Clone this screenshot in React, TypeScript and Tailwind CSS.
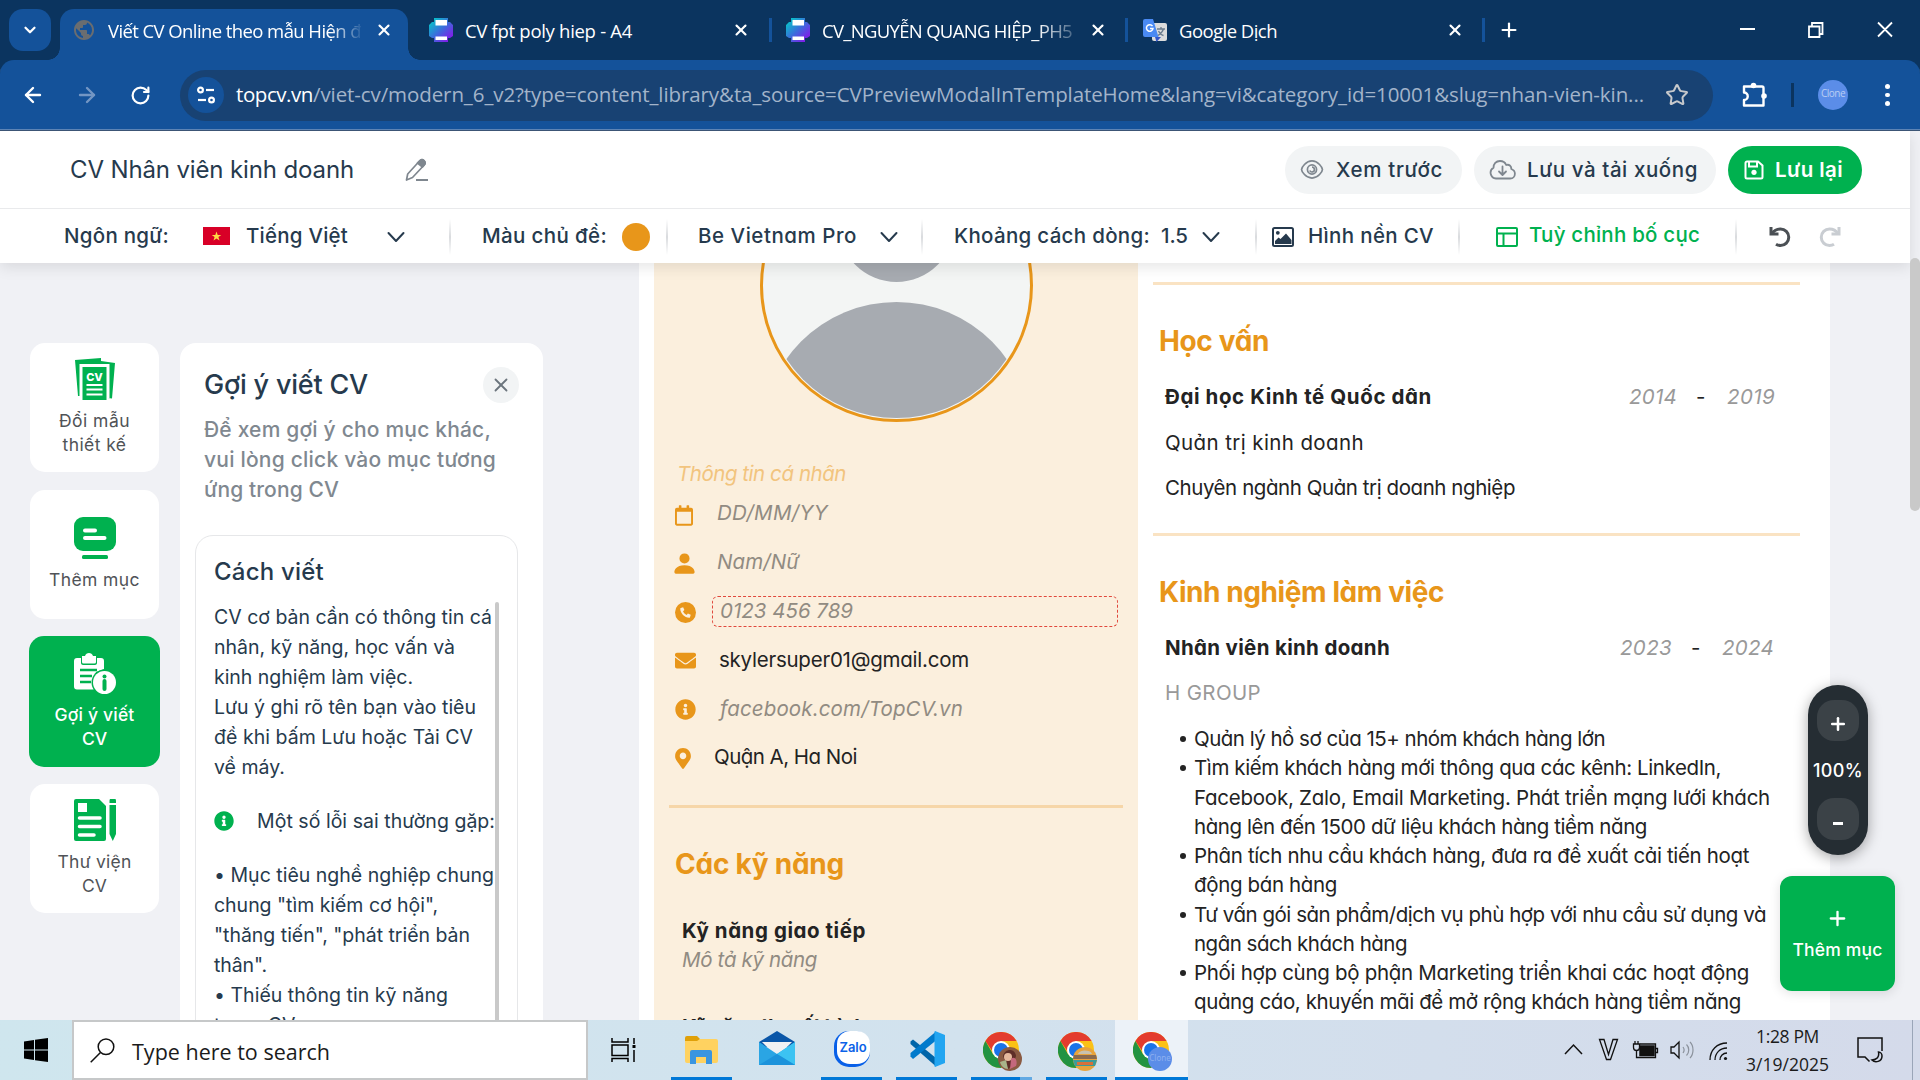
import { useLayoutEffect, useRef, useState, type ReactNode } from "react";
import { ChevronDown, X, Plus, ArrowLeft, ArrowRight, RotateCw, Star } from "lucide-react";
import { BsPersonFill } from "react-icons/bs";
import { FaEnvelope, FaInfoCircle, FaMapMarkerAlt, FaRegCalendar } from "react-icons/fa";
import { MdPublic } from "react-icons/md";

/* One line of text that is spaced to fill the width of its box. */
function T({ c, children }: { c: string; children: string }) {
  const box = useRef<HTMLSpanElement>(null);
  const inner = useRef<HTMLSpanElement>(null);
  const [gap, setGap] = useState(0);
  useLayoutEffect(() => {
    if (!box.current || !inner.current) return;
    inner.current.style.letterSpacing = "0px";
    const natural = inner.current.getBoundingClientRect().width;
    const value = (box.current.clientWidth - natural) / children.length;
    inner.current.style.letterSpacing = `${value}px`;
    setGap(value);
  }, [children]);
  return (
    <span ref={box} className={`block shrink-0 whitespace-pre ${c}`}>
      <span ref={inner} style={{ letterSpacing: `${gap}px` }}>{children}</span>
    </span>
  );
}

const PrinterIcon = () => (
  <svg viewBox="0 0 24 24" className="size-6 shrink-0">
    <defs>
      <linearGradient id="pg" x1="0" y1="0" x2="1" y2="1">
        <stop offset="0.1" stopColor="#06c3c9" />
        <stop offset="0.5" stopColor="#3c6bdc" />
        <stop offset="0.85" stopColor="#7d22e8" />
      </linearGradient>
    </defs>
    <path d="M5 0h14v4h2l3 3v11l-3 2h-2v4H5v-4H3l-3-2V7l3-3h2z" fill="url(#pg)" />
    <path d="M6.500 2h11.500v5.500H6.500zM6.500 18.500h11.500v3.500H6.500z" fill="#fff" />
  </svg>
);

const TranslateIcon = () => (
  <svg viewBox="0 0 24 24" className="size-6 shrink-0">
    <rect x="9" y="5" width="15" height="18" rx="2" fill="#dcdcdc" />
    <path d="M14 11h8M18 9v2M20.500 11c-1 3-3 5-5.500 6.500M15.500 13c1 2 3 4 5 4.500" stroke="#6b7b8c" strokeWidth="1.300" fill="none" />
    <path d="M12 19h6l-4.500 5z" fill="#3456c8" />
    <path d="M2 1h8l5.500 18H2a2 2 0 0 1-2-2V3a2 2 0 0 1 2-2z" fill="#4a8af4" />
    <path d="M9.500 8.200A3.300 3.300 0 1 0 10 10.500H7" stroke="#fff" strokeWidth="1.500" fill="none" />
  </svg>
);

const TabX = ({ c }: { c: string }) => <X className={`size-[18px] shrink-0 text-white ${c}`} strokeWidth={2.8} />;
const TabSep = ({ c }: { c: string }) => <div className={`h-6 w-[3px] shrink-0 bg-[#14529a] ${c}`} />;

function TabStrip() {
  return (
    <div className="flex h-[60px] items-start bg-[#0b345f] font-['Open_Sans','Noto_Sans',sans-serif] text-[18.500px] text-white">
      <div className="mt-[9px] ml-[9px] flex h-[42px] w-[42px] shrink-0 items-center justify-center rounded-[14px] bg-[#14529a]">
        <ChevronDown className="size-[18px]" strokeWidth={3} />
      </div>
      <div className="relative mt-[9px] ml-[9px] flex h-[51px] w-[348px] shrink-0 items-center rounded-t-[14px] bg-[#14529a] pb-[9px] pl-[12px]">
        <div className="absolute bottom-0 -left-3 size-3 bg-[radial-gradient(circle_at_0_0,transparent_11.5px,#14529a_12px)]" />
        <div className="absolute -right-3 bottom-0 size-3 bg-[radial-gradient(circle_at_100%_0,transparent_11.5px,#14529a_12px)]" />
        <MdPublic className="size-6 shrink-0 text-[#6a6d70]" />
        <div className="ml-[12px] pt-px [mask-image:linear-gradient(to_right,black_88%,transparent_101%)]">
          <T c="w-[253px]">Viết CV Online theo mẫu Hiện đ</T>
        </div>
        <TabX c="ml-[14px]" />
      </div>
      <div className="flex h-[60px] items-center">
        <div className="ml-[21px]"><PrinterIcon /></div>
        <T c="ml-[12px] w-[167px] pt-px">CV fpt poly hiep - A4</T>
        <TabX c="ml-[100px]" />
        <TabSep c="ml-[19px]" />
        <div className="ml-[14px]"><PrinterIcon /></div>
        <div className="ml-[12px] pt-px [mask-image:linear-gradient(to_right,black_86%,transparent_105%)]">
          <T c="w-[250px]">CV_NGUYỄN QUANG HIỆP_PH5</T>
        </div>
        <TabX c="ml-[17px]" />
        <TabSep c="ml-[18px]" />
        <div className="ml-[15px]"><TranslateIcon /></div>
        <T c="ml-[12px] w-[98px] pt-px">Google Dịch</T>
        <TabX c="ml-[169px]" />
        <TabSep c="ml-[18px]" />
        <Plus className="ml-[13px] size-[22px]" strokeWidth={2.4} />
        <svg viewBox="0 0 160 20" className="ml-[218px] h-5 w-[160px]" fill="none" stroke="#fff" strokeWidth="1.800">
          <path d="M2 9h15M71 6.500h10.500V17H71zM74 6V3h10.500v11H82M140 2.500l14 14M154 2.500l-14 14" />
        </svg>
      </div>
    </div>
  );
}

function Toolbar() {
  return (
    <div className="bg-[#0b345f]">
      <div className="flex h-[71px] items-center rounded-t-[14px] border-b border-[#3c5575] bg-[#14529a] font-['Open_Sans','Noto_Sans',sans-serif] text-[20.500px] shadow-[inset_0_-1px_0_#5d84b5]">
        <ArrowLeft className="ml-[21px] size-6 text-white" strokeWidth={2.4} />
        <ArrowRight className="ml-[30px] size-6 text-[#7396c4]" strokeWidth={2.4} />
        <RotateCw className="ml-[31px] size-[21px] text-white" strokeWidth={2.5} />
        <div className="ml-[29px] flex h-[51px] w-[1533px] shrink-0 items-center rounded-full bg-[#184273]">
          <div className="ml-[8px] flex size-9 items-center justify-center rounded-full bg-[#14529a]">
            <svg viewBox="0 0 20 20" className="size-5" fill="none" stroke="#fff" strokeWidth="2.200">
              <circle cx="4.500" cy="5" r="2.400" /><path d="M10 5h8" />
              <circle cx="15.500" cy="15" r="2.400" /><path d="M2 15h8" />
            </svg>
          </div>
          <T c="-mt-[2px] ml-[12px] w-[77px] text-white">topcv.vn</T>
          <T c="-mt-[2px] w-[1331px] text-[#a3b4ca]">/viet-cv/modern_6_v2?type=content_library&ta_source=CVPreviewModalInTemplateHome&lang=vi&category_id=10001&slug=nhan-vien-kin...</T>
          <Star className="ml-[21px] size-6 text-[#c7c9cc]" strokeWidth={2} />
        </div>
        <svg viewBox="0 0 26 26" className="ml-[28px] size-[26px] shrink-0" fill="none">
          <path d="M3 4.500h18a1.500 1.500 0 0 1 1.500 1.500v17.500H3v-5.500a3.500 3.500 0 0 0 0-7.500z" stroke="#fff" strokeWidth="2.400" strokeLinejoin="round" />
          <circle cx="12.500" cy="3.500" r="2.800" fill="#fff" /><circle cx="23" cy="14" r="2.800" fill="#fff" />
        </svg>
        <div className="ml-[24px] h-6 w-[3px] bg-[#0b345f]" />
        <div className="ml-[24px] flex size-[30px] shrink-0 items-center justify-center rounded-full bg-[#5b8de8] text-[#b9cdf3]">
          <T c="-mt-[4px] w-[24px] text-[10px] leading-[16px]">Clone</T>
        </div>
        <div className="ml-[37px] flex flex-col gap-1">
          <div className="size-[4.500px] rounded-full bg-white" />
          <div className="size-[4.500px] rounded-full bg-white" />
          <div className="size-[4.500px] rounded-full bg-white" />
        </div>
      </div>
    </div>
  );
}

const Sep = ({ c }: { c: string }) => (
  <div className={`h-9 w-[2px] shrink-0 bg-gradient-to-b from-transparent via-[#d9dbde] to-transparent ${c}`} />
);
const Chev = ({ c }: { c: string }) => (
  <svg viewBox="0 0 18 12" className={`h-3 w-[18px] shrink-0 ${c}`} fill="none" stroke="#263a4d" strokeWidth="2">
    <path d="M1.500 2 9 10l7.500-8" strokeLinecap="round" strokeLinejoin="round" />
  </svg>
);

function Header() {
  return (
    <div className="relative z-10 w-[1910px] bg-white font-['Inter',sans-serif] text-[20.500px] text-[#263a4d] shadow-[0_4px_14px_rgba(0,0,0,0.1)] [font-variation-settings:'opsz'_14]">
      <div className="flex h-[78px] items-center border-b border-[#e9eaec]">
        <T c="ml-[70px] w-[284px] text-[24px]">CV Nhân viên kinh doanh</T>
        <svg viewBox="0 0 24 24" className="ml-[51px] size-6 shrink-0" fill="none" stroke="#7f878f" strokeWidth="1.700" strokeLinejoin="round">
          <path d="M1.500 22l1.200-6L14.500 3c1.500-1.600 3-1.600 4.500-.3 1.500 1.400 1.500 2.800.2 4.300L7.500 19.500z" />
          <path d="M14.500 3c1.500-1.600 3-1.600 4.500-.3 1.500 1.400 1.500 2.800.2 4.300l-1.700 2-5-4z" fill="#7f878f" />
          <path d="M11 22h12" strokeWidth="2" />
        </svg>
        <div className="ml-[856px] flex h-12 w-[177px] shrink-0 items-center rounded-full bg-[#f2f4f5] font-medium">
          <svg viewBox="0 0 24 20" className="ml-[15px] h-[19px] w-6 shrink-0" fill="none" stroke="#7f878f" strokeWidth="1.800">
            <path d="M1 10c0-2 4.500-9 11-9s11 7 11 9-4.500 9-11 9S1 12 1 10z" />
            <circle cx="12" cy="10" r="4.800" /><path d="M12 7.600A2.500 2.500 0 1 1 9.700 11" />
          </svg>
          <T c="ml-[12px] w-[107px] pt-[2px]">Xem trước</T>
        </div>
        <div className="ml-[12px] flex h-12 w-[242px] shrink-0 items-center rounded-full bg-[#f2f4f5] font-medium">
          <svg viewBox="0 0 27 20" className="ml-[15px] h-5 w-[27px] shrink-0" fill="none" stroke="#7f878f" strokeWidth="1.800" strokeLinecap="round" strokeLinejoin="round">
            <path d="M7 18.500a5.800 5.800 0 0 1-2.500-10.800C4.500 4 7 1 11 1c3 0 5.200 1.500 6.200 4C20 4 22.500 6 22.300 9c2 .7 3.600 2.300 3.600 4.700 0 2.800-2 4.800-4.600 4.800z" />
            <path d="M13.500 6.500v8M10 11.500l3.500 3.500 3.500-3.500" />
          </svg>
          <T c="ml-[11px] w-[171px] pt-[2px]">Lưu và tải xuống</T>
        </div>
        <div className="ml-[12px] flex h-12 w-[134px] shrink-0 items-center rounded-full bg-[#00b14f] font-semibold text-white">
          <svg viewBox="0 0 20 20" className="ml-[16px] size-5" fill="none" stroke="#fff" strokeWidth="2">
            <path d="M3 1.500h11l4.500 4V17a1.500 1.500 0 0 1-1.500 1.500H3A1.500 1.500 0 0 1 1.500 17V3A1.500 1.500 0 0 1 3 1.500zM5 2v4.500h8V2" />
            <circle cx="10" cy="12.300" r="2.600" fill="#fff" stroke="none" />
          </svg>
          <T c="ml-[11px] w-[68px] pt-[2px]">Lưu lại</T>
        </div>
      </div>
      <div className="flex h-[54px] items-center pt-px font-[450]">
        <T c="ml-[64px] w-[105px]">Ngôn ngữ:</T>
        <svg viewBox="0 0 27 18" className="-mt-[2px] ml-[34px] h-[18px] w-[27px] shrink-0">
          <rect width="27" height="18" fill="#d80027" />
          <path d="M13.500 4.500l1.200 3.400h3.600l-2.900 2.200 1.100 3.400-3-2.100-3 2.100 1.100-3.400-2.900-2.200h3.600z" fill="#ffda44" />
        </svg>
        <T c="ml-[16px] w-[102px]">Tiếng Việt</T>
        <Chev c="ml-[39px]" />
        <Sep c="ml-[44px]" />
        <T c="ml-[31px] w-[125px]">Màu chủ đề:</T>
        <div className="ml-[15px] size-7 shrink-0 rounded-full bg-[#e8961a]" />
        <Sep c="ml-[16px]" />
        <T c="ml-[30px] w-[159px] [font-feature-settings:'cv11']">Be Vietnam Pro</T>
        <Chev c="ml-[23px]" />
        <Sep c="ml-[23px]" />
        <T c="ml-[31px] w-[196px]">Khoảng cách dòng:</T>
        <T c="ml-[11px] w-[27px]">1.5</T>
        <Chev c="ml-[14px]" />
        <Sep c="ml-[35px]" />
        <svg viewBox="0 0 22 20" className="ml-[15px] h-5 w-[22px] shrink-0">
          <rect x="1" y="1" width="20" height="18" rx="1.500" fill="none" stroke="#263a4d" strokeWidth="2" />
          <circle cx="5.800" cy="5.800" r="1.900" fill="#263a4d" />
          <path d="M3 17v-3l3.500-3.500 2 1.500L14 6.500l5.500 6.500v4z" fill="#263a4d" />
        </svg>
        <T c="ml-[14px] w-[126px]">Hình nền CV</T>
        <Sep c="ml-[24px]" />
        <svg viewBox="0 0 22 20" className="ml-[36px] h-5 w-[22px] shrink-0" fill="none" stroke="#00b14f" strokeWidth="2">
          <rect x="1" y="1" width="20" height="18" rx="1" /><path d="M1 6.500h20M7.500 6.500V19" />
        </svg>
        <T c="-mt-[2px] ml-[11px] w-[171px] font-medium text-[#00b14f]">Tuỳ chỉnh bố cục</T>
        <Sep c="ml-[35px]" />
        <svg viewBox="0 0 22 22" className="ml-[32px] size-[22px] shrink-0" fill="none" stroke="#4b5055" strokeWidth="3">
          <path d="M2 1v7h7.500" /><path d="M3 7.500C5 4.500 8 3 11.500 3a8 8 0 1 1 0 16.500c-1.800 0-3.300-.4-4.500-1.200" />
        </svg>
        <svg viewBox="0 0 22 22" className="ml-[28px] size-[22px] shrink-0" fill="none" stroke="#c9cdd2" strokeWidth="3">
          <path d="M20 1v7h-7.500" /><path d="M19 7.500C17 4.500 14 3 10.500 3a8 8 0 1 0 0 16.500c1.800 0 3.300-.4 4.500-1.200" />
        </svg>
      </div>
    </div>
  );
}

function SideCard({ icon, active, c, children }: { icon: ReactNode; active?: boolean; c: string; children: ReactNode }) {
  return (
    <div className={`flex shrink-0 flex-col items-center rounded-[15px] ${active ? "-mx-px h-[131px] bg-[#00b14f] font-medium text-white" : "h-[129px] bg-white text-[#505357]"} ${c}`}>
      {icon}
      {children}
    </div>
  );
}

function SideBar() {
  return (
    <div className="mt-[80px] ml-[30px] flex w-[129px] shrink-0 flex-col font-['Inter',sans-serif] text-[17.500px] leading-6 [font-variation-settings:'opsz'_14]">
      <SideCard c="pt-[14px]" icon={
        <svg viewBox="0 0 42 44" className="h-[44px] w-[42px]">
          <path d="M1 3 27 1v3l14 2-3 35.500-4-.5V8H7v31H4z" fill="#00b14f" />
          <path d="M8.500 10h24v33h-24z" fill="#00b14f" />
          <path d="M6.500 39V8h28v33" stroke="#fff" strokeWidth="2" fill="none" />
          <path d="M12.500 28h16M12.500 32.500h16M12.500 37.500h16" stroke="#fff" strokeWidth="2.200" />
          <text x="20.500" y="24" fontSize="11" fontWeight="800" fill="#fff" textAnchor="middle" fontFamily="Inter">CV</text>
        </svg>
      }>
        <T c="mt-[8px] w-[71px]">Đổi mẫu</T>
        <T c="w-[64px]">thiết kế</T>
      </SideCard>
      <SideCard c="mt-[18px] pt-[27px]" icon={
        <svg viewBox="0 0 42 42" className="size-[42px]">
          <rect width="42" height="34" rx="9" fill="#00b14f" />
          <rect x="8" y="38" width="26" height="4" rx="1.500" fill="#00b14f" />
          <path d="M11 13.500h10M11 21h19.500" stroke="#fff" strokeWidth="4" strokeLinecap="round" />
        </svg>
      }>
        <T c="mt-[9px] w-[91px]">Thêm mục</T>
      </SideCard>
      <SideCard active c="mt-[17px] pt-[16px]" icon={
        <svg viewBox="0 0 42 42" className="size-[42px]">
          <path d="M3 6h4v5c0 1 1 2 2 2h12c1 0 2-1 2-2V6h4a3 3 0 0 1 3 3v8l-8 3-3 8 3 9-3 .500H3a3 3 0 0 1-3-3V9a3 3 0 0 1 3-3z" fill="#fff" />
          <path d="M8 4h3c1-4 7-4 8 0h3v6a1.500 1.500 0 0 1-1.500 1.500h-11A1.500 1.500 0 0 1 8 10z" fill="#fff" />
          <path d="M6 18h17M6 24h12M6 30h11" stroke="#00b14f" strokeWidth="2.500" />
          <circle cx="30.500" cy="30.500" r="13" fill="#00b14f" />
          <circle cx="30.500" cy="30.500" r="11.500" fill="#fff" />
          <circle cx="30.500" cy="24.500" r="2" fill="#00b14f" />
          <path d="M30.500 29v8" stroke="#00b14f" strokeWidth="4" strokeLinecap="round" />
        </svg>
      }>
        <T c="mt-[9px] w-[80px]">Gợi ý viết</T>
        <T c="w-[25px]">CV</T>
      </SideCard>
      <SideCard c="mt-[17px] pt-[15px]" icon={
        <svg viewBox="0 0 42 42" className="size-[42px]">
          <path d="M2 0h23l7 7v33a2 2 0 0 1-2 2H2a2 2 0 0 1-2-2V2a2 2 0 0 1 2-2z" fill="#00b14f" />
          <path d="M4 4h9v9H4z" fill="#fff" />
          <path d="M5.500 19H26M5.500 27.500H26M5.500 36H20" stroke="#fff" strokeWidth="3.500" strokeLinecap="round" />
          <path d="M35.500 4V2a3 3 0 0 1 6.500 0v2zM35.500 6H42v29l-3.200 7-3.300-7z" fill="#00b14f" />
        </svg>
      }>
        <T c="mt-[9px] w-[74px]">Thư viện</T>
        <T c="w-[25px]">CV</T>
      </SideCard>
    </div>
  );
}

function HintPanel() {
  return (
    <div className="mt-[80px] ml-[21px] h-[700px] w-[363px] shrink-0 rounded-[16px] bg-white font-['Inter',sans-serif] text-[#263a4d] [font-variation-settings:'opsz'_14]">
      <div className="mt-[24px] ml-[24px] flex h-9 items-center">
        <T c="w-[164px] text-[27px] leading-9 font-medium">Gợi ý viết CV</T>
        <div className="ml-[115px] flex size-9 items-center justify-center rounded-full bg-[#f2f4f5]">
          <X className="size-[22px] text-[#6c757d]" strokeWidth={2} />
        </div>
      </div>
      <div className="mt-[12px] ml-[24px] text-[21px] leading-[30px] font-[450] text-[#808890]">
        <T c="w-[287px]">Để xem gợi ý cho mục khác,</T>
        <T c="w-[292px]">vui lòng click vào mục tương</T>
        <T c="w-[135px]">ứng trong CV</T>
      </div>
      <div className="mt-[30px] ml-[15px] h-[540px] w-[323px] rounded-[18px] border border-[#e6e7e9] pl-[18px]">
        <T c="mt-[20px] w-[110px] text-[24px] leading-[32px] font-medium">Cách viết</T>
        <div className="mt-[14px] flex">
          <div className="w-[281px] shrink-0 text-[19.500px] leading-[30px]">
            <T c="w-[278px]">CV cơ bản cần có thông tin cá</T>
            <T c="w-[241px]">nhân, kỹ năng, học vấn và</T>
            <T c="w-[199px]">kinh nghiệm làm việc.</T>
            <T c="w-[262px]">Lưu ý ghi rõ tên bạn vào tiêu</T>
            <T c="w-[259px]">đề khi bấm Lưu hoặc Tải CV</T>
            <T c="w-[71px]">về máy.</T>
            <div className="mt-[24px] mb-[24px] flex items-center">
              <FaInfoCircle className="size-5 text-[#00b14f]" />
              <T c="ml-[23px] w-[238px]">Một số lỗi sai thường gặp:</T>
            </div>
            <T c="w-[280px]">• Mục tiêu nghề nghiệp chung</T>
            <T c="w-[224px]">{'chung "tìm kiếm cơ hội",'}</T>
            <T c="w-[256px]">{'"thăng tiến", "phát triển bản'}</T>
            <T c="w-[53px]">{'thân".'}</T>
            <T c="w-[234px]">• Thiếu thông tin kỹ năng</T>
            <T c="w-[85px]">trong CV.</T>
          </div>
          <div className="w-1 rounded-full bg-[#c9c9c9]" />
        </div>
      </div>
    </div>
  );
}

function Contact({ icon, children }: { icon: ReactNode; children: ReactNode }) {
  return (
    <div className="flex h-[49px] items-center text-[#232323]">
      <div className="mt-[3px] w-[36px] text-[#e8961a]">{icon}</div>
      {children}
    </div>
  );
}

function CvLeft() {
  return (
    <div className="ml-[15px] h-[760px] w-[484px] shrink-0 bg-[#fbefdd]">
      <svg viewBox="0 0 273 159" className="ml-[106px] h-[159px] w-[273px]">
        <defs><clipPath id="ph"><circle cx="136.500" cy="22.500" r="132.500" /></clipPath></defs>
        <circle cx="136.500" cy="22.500" r="135" fill="#f3f5f4" stroke="#e8961a" strokeWidth="3" />
        <g clipPath="url(#ph)" fill="#a7abb1">
          <circle cx="136.500" cy="-39" r="58" /><circle cx="136.500" cy="174" r="135" />
        </g>
      </svg>
      <div className="mt-[37px] ml-[21px] text-[#918b82]">
        <T c="ml-[2px] w-[169px] text-[#f2c47e] italic">Thông tin cá nhân</T>
        <Contact icon={<FaRegCalendar className="mt-[2px] h-[21px] w-[18px]" />}><T c="ml-[6px] w-[111px] text-[#918b82] italic">DD/MM/YY</T></Contact>
        <Contact icon={<BsPersonFill className="-ml-[4px] size-[27px]" />}><T c="ml-[6px] w-[82px] text-[#918b82] italic">Nam/Nữ</T></Contact>
        <Contact icon={
          <div className="flex size-[21px] items-center justify-center rounded-full bg-[#e8961a] text-[#fbefdd]">
            <svg viewBox="0 0 12 12" className="size-[11px]" fill="currentColor"><path d="M.800 1 3.400.300l1.400 3-1.500 1.300c.8 1.800 2.200 3.200 4 4l1.300-1.500 3.100 1.400-.8 2.600c-.2.400-.4.600-.9.600C5 11.700.300 7 .300 2c0-.500.200-.800.500-1z" /></svg>
          </div>
        }>
          <div className="mt-[2px] ml-px flex h-[31px] w-[406px] shrink-0 items-center rounded-[6px] border border-dashed border-[#e0483c] pb-[2px] pl-[7px]">
            <T c="w-[133px] text-[#918b82] italic">0123 456 789</T>
          </div>
        </Contact>
        <Contact icon={<FaEnvelope className="-mt-px size-[21px]" />}><T c="ml-[8px] w-[250px]">skylersuper01@gmail.com</T></Contact>
        <Contact icon={<FaInfoCircle className="-mt-px size-[21px]" />}><T c="-mt-px ml-[9px] w-[243px] text-[#918b82] italic">facebook.com/TopCV.vn</T></Contact>
        <Contact icon={<FaMapMarkerAlt className="-mt-px h-[21px] w-[16px]" />}><T c="-mt-[2px] ml-[3px] w-[143px]">Quận A, Ha Noi</T></Contact>
      </div>
      <div className="mt-[23px] ml-[15px] h-[3px] w-[454px] bg-[#f6d6a8]" />
      <T c="mt-[36px] ml-[21px] w-[169px] text-[28px] leading-10 font-bold text-[#e8961a]">Các kỹ năng</T>
      <T c="mt-[32px] ml-[28px] w-[184px] font-bold text-[#232323]">Kỹ năng giao tiếp</T>
      <T c="ml-[28px] w-[135px] text-[#918b82] italic">Mô tả kỹ năng</T>
      <T c="mt-[38px] ml-[28px] w-[184px] font-bold text-[#232323]">Kỹ năng thuyết trình</T>
    </div>
  );
}

const Rule = ({ c }: { c: string }) => <div className={`-ml-[12px] h-[3px] w-[647px] bg-[#fae3c3] ${c}`} />;
const Dot = () => <div className="mt-[12px] size-[6px] shrink-0 rounded-full bg-[#232323]" />;

function Bullet({ children }: { children: ReactNode }) {
  return (
    <div className="flex gap-[8px]">
      <Dot />
      <div>{children}</div>
    </div>
  );
}

function CvRight() {
  return (
    <div className="ml-[27px] w-[650px] shrink-0 text-[#232323]">
      <Rule c="mt-[19px]" />
      <T c="mt-[36px] -ml-[6px] w-[110px] text-[28px] leading-10 font-bold text-[#e8961a]">Học vấn</T>
      <div className="mt-[21px] flex">
        <T c="w-[267px] font-bold">Đại học Kinh tế Quốc dân</T>
        <T c="ml-[197px] w-[48px] text-[#999] italic">2014</T>
        <T c="ml-[19px] w-[9px]">-</T>
        <T c="ml-[22px] w-[48px] text-[#999] italic">2019</T>
      </div>
      <T c="mt-[17px] w-[199px]">Quản trị kinh doanh</T>
      <T c="mt-[16px] w-[350px]">Chuyên ngành Quản trị doanh nghiệp</T>
      <Rule c="mt-[31px]" />
      <T c="mt-[36px] -ml-[6px] w-[285px] text-[28px] leading-10 font-bold text-[#e8961a]">Kinh nghiệm làm việc</T>
      <div className="mt-[21px] flex">
        <T c="w-[225px] font-bold">Nhân viên kinh doanh</T>
        <T c="ml-[230px] w-[52px] text-[#999] italic">2023</T>
        <T c="ml-[19px] w-[9px]">-</T>
        <T c="ml-[22px] w-[52px] text-[#999] italic">2024</T>
      </div>
      <T c="mt-[16px] w-[96px] text-[#999]">H GROUP</T>
      <div className="mt-[17px] ml-[15px] leading-[29.250px]">
        <Bullet><T c="w-[411px]">Quản lý hồ sơ của 15+ nhóm khách hàng lớn</T></Bullet>
        <Bullet>
          <T c="w-[527px]">Tìm kiếm khách hàng mới thông qua các kênh: LinkedIn,</T>
          <T c="w-[576px]">Facebook, Zalo, Email Marketing. Phát triển mạng lưới khách</T>
          <T c="w-[453px]">hàng lên đến 1500 dữ liệu khách hàng tiềm năng</T>
        </Bullet>
        <Bullet>
          <T c="w-[555px]">Phân tích nhu cầu khách hàng, đưa ra đề xuất cải tiến hoạt</T>
          <T c="w-[143px]">động bán hàng</T>
        </Bullet>
        <Bullet>
          <T c="w-[572px]">Tư vấn gói sản phẩm/dịch vụ phù hợp với nhu cầu sử dụng và</T>
          <T c="w-[213px]">ngân sách khách hàng</T>
        </Bullet>
        <Bullet>
          <T c="w-[555px]">Phối hợp cùng bộ phận Marketing triển khai các hoạt động</T>
          <T c="w-[547px]">quảng cáo, khuyến mãi để mở rộng khách hàng tiềm năng</T>
          <T c="w-[36px]">mới</T>
        </Bullet>
      </div>
    </div>
  );
}

function ChromeIcon({ badge }: { badge: ReactNode }) {
  return (
    <svg viewBox="0 0 40 40" className="mt-[4px] ml-[3px] size-10 shrink-0">
      <circle cx="18" cy="18" r="18" fill="#fbc116" />
      <path d="M18 9h15.600A18 18 0 0 0 2.400 9L10 20z" fill="#e33b2e" />
      <path d="M2.400 9A18 18 0 0 0 18 36l7.800-13.500L10.200 22.500z" fill="#229342" />
      <circle cx="18" cy="18" r="9" fill="#fff" /><circle cx="18" cy="18" r="7" fill="#1a73e8" />
      {badge}
    </svg>
  );
}

function TaskItem({ line, c, children }: { line?: ReactNode; c: string; children: ReactNode }) {
  return (
    <div className={`flex h-[60px] shrink-0 flex-col items-center justify-between ${c}`}>
      <div className="flex h-[57px] items-center pt-[3px]">{children}</div>
      {line}
    </div>
  );
}

const Line = () => <div className="h-[3px] w-full bg-[#0078d7]" />;

function Taskbar() {
  return (
    <div className="flex h-[60px] items-center bg-gradient-to-r from-[#cfe6ee] via-[#d2e2ee] to-[#d4daea] font-['Open_Sans','Noto_Sans',sans-serif] text-[#1b1b1b]">
      <svg viewBox="0 0 24 24" className="ml-[24px] size-6 shrink-0" fill="#000">
        <path d="M0 3.400 10 2v9.500H0zM11 1.800 24 0v11.500H11zM0 12.500h10V22L0 20.600zM11 12.500h13V24l-13-1.800z" />
      </svg>
      <div className="ml-[24px] flex h-[60px] w-[516px] shrink-0 items-center border-2 border-[#c6c8c9] bg-white">
        <svg viewBox="0 0 25 25" className="ml-[16px] size-[25px] shrink-0" fill="none" stroke="#111" strokeWidth="1.500">
          <circle cx="16" cy="8.800" r="7.800" /><path d="M10.500 14.500.700 24.300" />
        </svg>
        <T c="ml-[17px] w-[198px] pt-[4px] text-[21.500px]">Type here to search</T>
      </div>
      <svg viewBox="0 0 26 24" className="ml-[23px] h-6 w-[26px] shrink-0" fill="none" stroke="#000" strokeWidth="1.500">
        <path d="M1 0v4h16V0M1 7h16v10.500H1zM1 24v-3.500h16V24M23 0v6M23 12v12" /><path d="M21.500 7h3v3h-3z" fill="#000" stroke="none" />
      </svg>
      <TaskItem line={<Line />} c="ml-[34px] w-[61px]">
        <svg viewBox="0 0 33 28" className="h-7 w-[33px]">
          <path d="M0 2a2 2 0 0 1 2-2h10l3 3-2 5H0z" fill="#e0a008" />
          <path d="M0 5h12l3-2h16a2 2 0 0 1 2 2v20a2 2 0 0 1-2 2H2a2 2 0 0 1-2-2z" fill="#ffd260" />
          <path d="M5 28V16a2 2 0 0 1 2-2h18a2 2 0 0 1 2 2v12h-6v-7H11v7z" fill="#3a95e0" />
        </svg>
      </TaskItem>
      <TaskItem c="ml-[14px] w-[61px]">
        <svg viewBox="0 0 36 34" className="mb-[4px] h-[34px] w-9">
          <path d="M0 11 18 0l18 11v5H0z" fill="#0a56a8" />
          <path d="M3 11h30L18 26z" fill="#f1f1f3" />
          <path d="M0 11l18 12L36 11v23H0z" fill="#2aa5e4" />
          <path d="M18 23 36 11v23z" fill="#3cc3f2" /><path d="M18 23 36 34H0z" fill="#1c93db" />
        </svg>
      </TaskItem>
      <TaskItem line={<Line />} c="ml-[14px] w-[61px]">
        <div className="mb-[3px] flex size-9 items-center justify-center rounded-[15px] bg-[#0860e8] pb-[3px] pl-[3px]">
          <div className="flex h-[33px] w-[33px] items-center justify-center rounded-[13px] bg-white font-['Inter',sans-serif] font-semibold text-[#0b62e8]">
            <T c="w-[27px] text-[13px] leading-4">Zalo</T>
          </div>
        </div>
      </TaskItem>
      <TaskItem line={<Line />} c="ml-[14px] w-[61px]">
        <svg viewBox="0 0 36 36" className="mb-[3px] size-9">
          <path d="M1.500 10.500 4 8.500 27 27v8.500L1.500 13z" fill="#0065a9" />
          <path d="M1.500 25.500 4 28 27 9.500V.500L1.500 22z" fill="#007acc" />
          <path d="M26 0l10 4v28l-10 4c-1-1-.500-2-.500-3V3c0-1-.500-2 .500-3z" fill="#22a5f1" />
        </svg>
      </TaskItem>
      <TaskItem c="ml-[14px] w-[61px]" line={
        <div className="flex h-[3px] w-full">
          <div className="w-[49px] bg-[#0078d7]" />
          <div className="grow bg-[#62a9e3]" />
        </div>
      }>
        <ChromeIcon badge={<g><circle cx="27" cy="27" r="12" fill="#8a5a42" /><path d="M20 24c2-8 12-8 13 0l-3 9-5 4z" fill="#5e2e28" /><circle cx="25" cy="25" r="4" fill="#e5b79c" /><path d="M28 27c4-4 7 2 5 7l-6 3z" fill="#c4687c" /><path d="M17 30l6-2 2 9c-4 0-7-3-8-7z" fill="#a9b489" /></g>} />
      </TaskItem>
      <TaskItem line={<Line />} c="ml-[14px] w-[61px]">
        <ChromeIcon badge={<g><circle cx="27" cy="27" r="12" fill="#e8a33c" /><path d="M16 23h22l1 4H15z" fill="#8a6a4e" /><path d="M20 22c1-4 12-5 14 0z" fill="#c9c2ae" /><path d="M15 28h24l-2 6H17z" fill="#3d9c9a" /><path d="M19 30h16v3H19z" fill="#d8713a" /></g>} />
      </TaskItem>
      <TaskItem line={<Line />} c="ml-[8px] w-[73px] bg-[#ecf2f8]">
        <ChromeIcon badge={<g><circle cx="27" cy="27" r="12" fill="#5b8de8" /><text x="27" y="29" fontSize="8" textAnchor="middle" fill="#8db0f0" fontFamily="Noto Sans">Clone</text></g>} />
      </TaskItem>
      <svg viewBox="0 0 165 30" className="ml-[376px] h-[30px] w-[165px] shrink-0" fill="none" stroke="#111" strokeWidth="1.500">
        <path d="M1 19l8.500-9 8.500 9" />
        <path d="M35.500 4.500h4.500l4.500 15 4.500-15h4.500l-7 20h-4z" strokeWidth="1.300" />
        <rect x="76" y="11" width="14" height="9.500" fill="#111" /><path d="M76 9h15.500v13.500H75M91.500 13.500h2v4h-2" strokeWidth="1.300" />
        <path d="M69.500 9h6v3.500c0 2-1 3-3 3s-3-1-3-3zM72.500 15.500v7h2.500M71 6v3M74 6v3" strokeWidth="1.300" />
        <path d="M107 12h3l5-5v16l-5-5h-3z" strokeWidth="1.300" />
        <path d="M119 12c1.500 2 1.500 4 0 6M122.500 9.500c3 3 3 8 0 11M126 7c4 4 4 12 0 16" stroke="#8b929c" strokeWidth="1.200" />
        <path d="M146 25c0-10 7-17 17-17M151 25c0-7 5-12 12-12M156 25c0-4 3-7 7-7" strokeWidth="1.300" /><circle cx="161.500" cy="23.500" r="1.600" fill="#111" stroke="none" />
      </svg>
      <div className="ml-[17px] flex w-[83px] shrink-0 flex-col items-center text-[17.500px] leading-7">
        <T c="w-[63px]">1:28 PM</T>
        <T c="w-[83px]">3/19/2025</T>
      </div>
      <svg viewBox="0 0 26 26" className="ml-[28px] size-[26px] shrink-0" fill="none" stroke="#111" strokeWidth="1.500">
        <path d="M12.500 24.500 8 20H1V1h24v13" /><path d="M21.500 15c1 5-1.500 7.500-6.500 8 3 3 10 2 10-4 0-2-1.500-4-3.500-4z" />
      </svg>
      <div className="ml-[29px] h-[60px] w-px bg-[#9aa5b8]" />
    </div>
  );
}

export default function App() {
  return (
    <div className="flex h-[1080px] w-[1920px] flex-col overflow-hidden">
      <div className="shrink-0"><TabStrip /><Toolbar /></div>
      <div className="relative h-[889px] shrink-0 overflow-hidden bg-[#f0f1f5]">
        <Header />
        <div className="flex h-[757px]">
          <SideBar />
          <HintPanel />
          <div className="ml-[96px] flex h-[760px] w-[1191px] shrink-0 bg-white font-['Inter',sans-serif] text-[20.500px] leading-[29px] [font-feature-settings:'cv11'] [font-variation-settings:'opsz'_14]">
            <CvLeft />
            <CvRight />
          </div>
        </div>
        <div className="absolute top-[127px] right-0 z-20 h-[253px] w-[10px] rounded-full bg-[#c9c9c9]" />
        <div className="absolute top-[554px] left-[1808px] flex h-[170px] w-[60px] flex-col items-center rounded-full bg-[#252d33] py-[15px] font-['Inter',sans-serif] text-[18px] text-white shadow-[0_3px_14px_rgba(0,0,0,0.35)]">
          <div className="flex size-[42px] items-center justify-center rounded-[17px] bg-[#3b4247] pt-[6px]">
            <Plus className="size-5" strokeWidth={3} />
          </div>
          <T c="mt-[16px] w-[50px] leading-7 font-medium">100%</T>
          <div className="mt-[13px] flex size-[42px] items-center justify-center rounded-[17px] bg-[#3b4247] pt-[8px]">
            <div className="h-[3px] w-[10px] bg-white" />
          </div>
        </div>
        <div className="absolute top-[745px] left-[1780px] flex size-[115px] flex-col items-center rounded-[12px] bg-[#00b14f] font-['Inter',sans-serif] text-[17.500px] text-white shadow-[0_2px_12px_rgba(0,0,0,0.12)]">
          <Plus className="mt-[31px] size-[23px]" strokeWidth={2.4} />
          <T c="mt-[8px] w-[90px] leading-6 font-medium">Thêm mục</T>
        </div>
      </div>
      <Taskbar />
    </div>
  );
}
